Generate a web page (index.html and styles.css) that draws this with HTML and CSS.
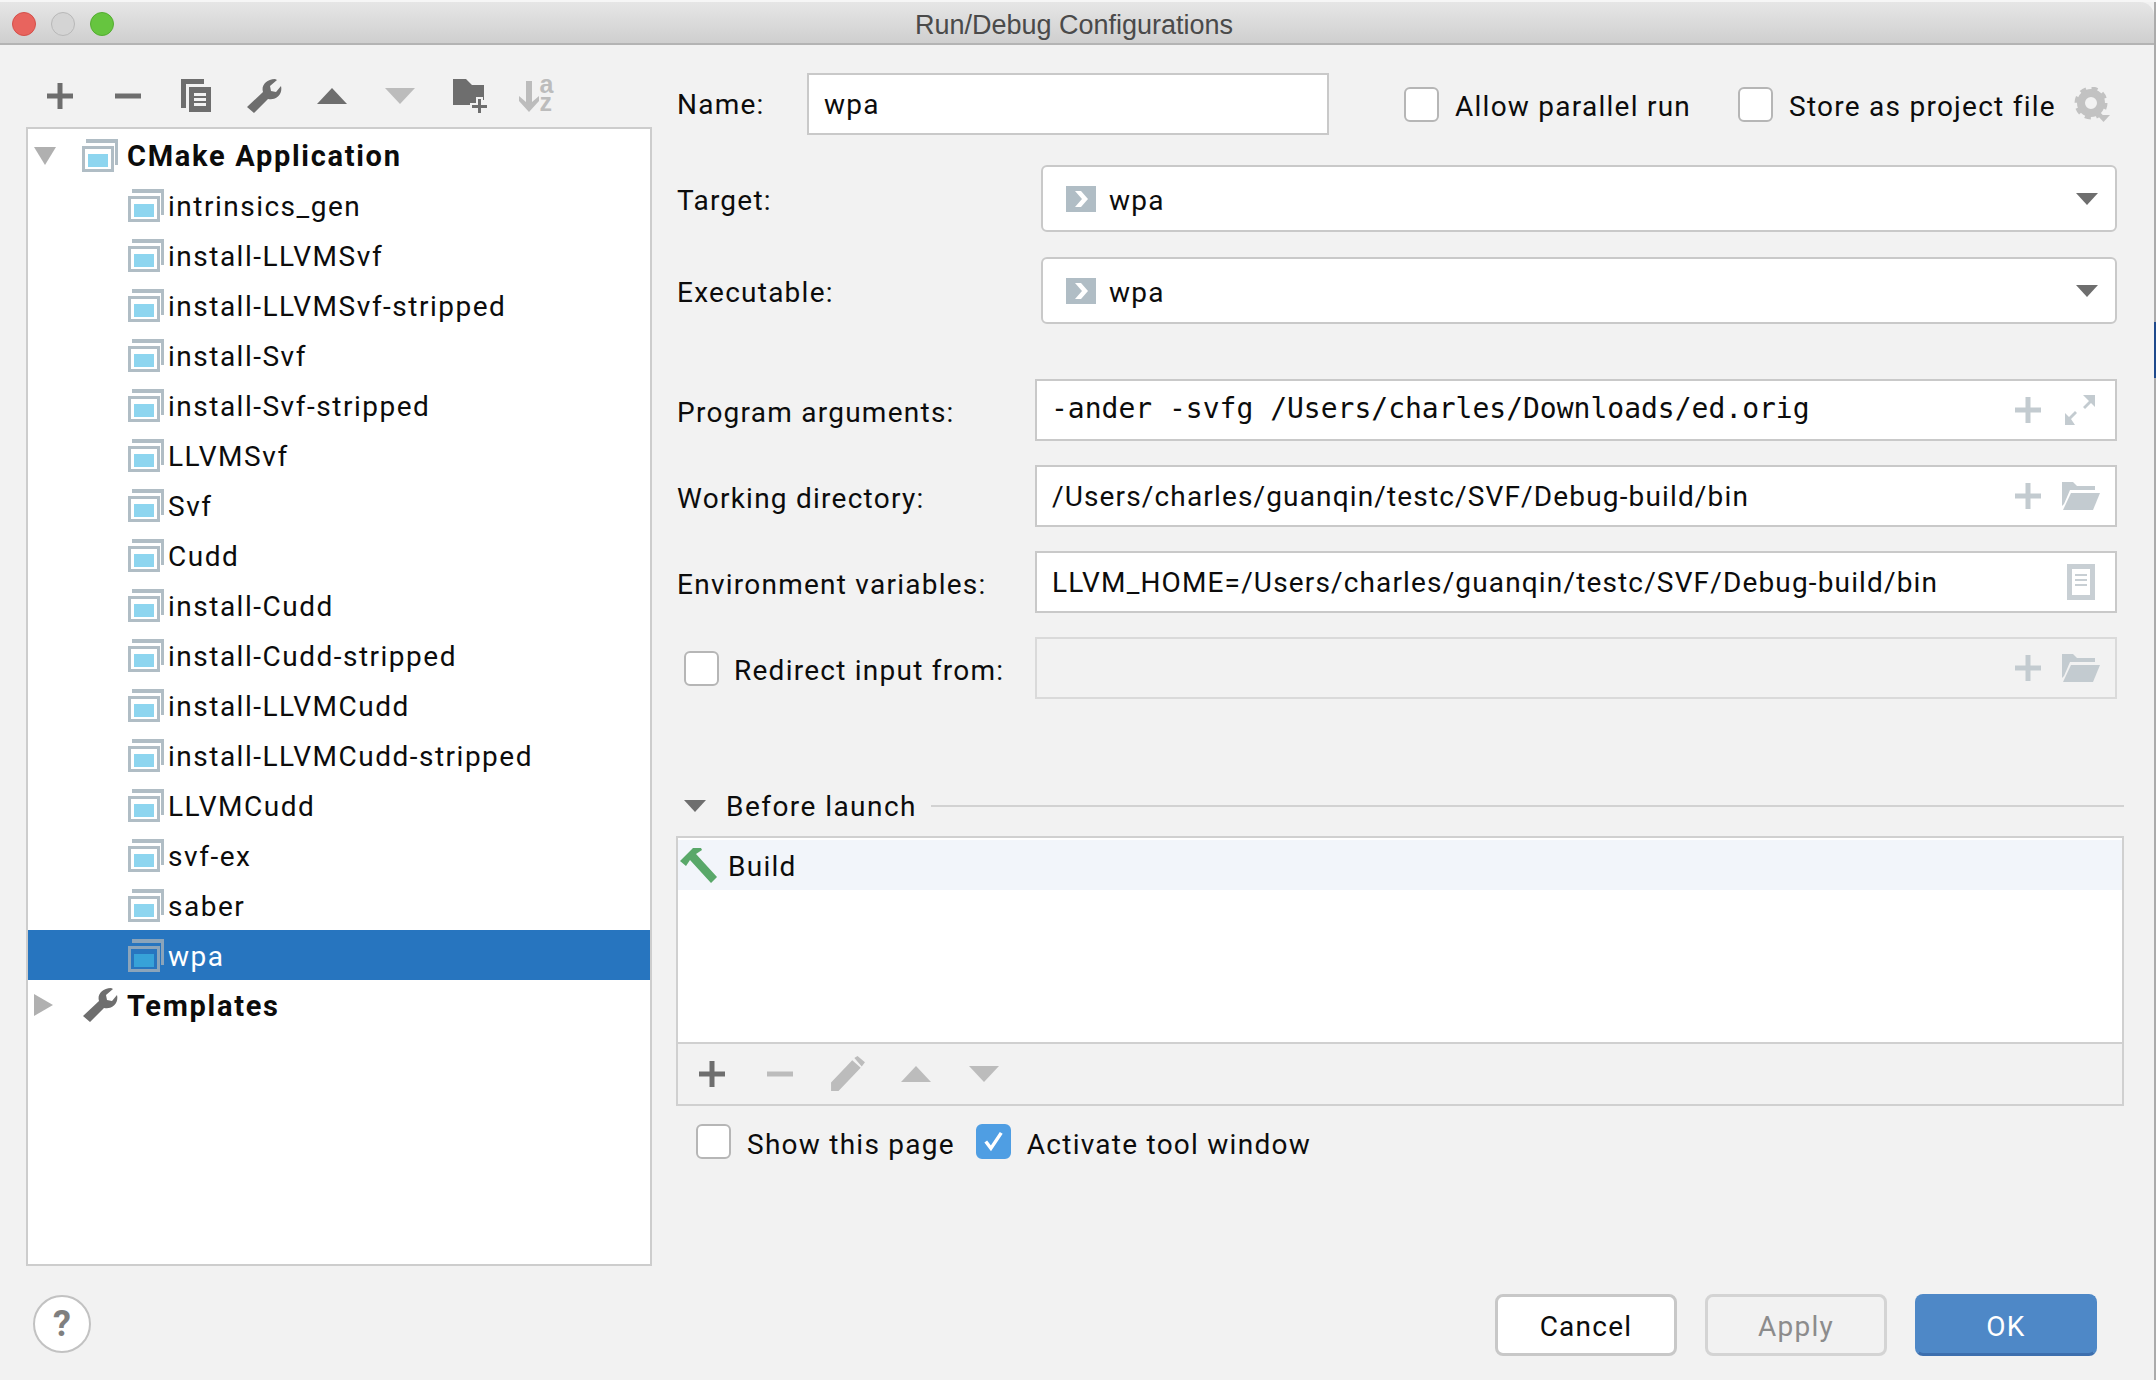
FILE: index.html
```html
<!DOCTYPE html>
<html lang="en">
  <head>
    <meta charset="UTF-8" />
    <title>Run/Debug Configurations</title>
    <link rel="stylesheet" href="styles.css">
  </head>
  <body>
    <!-- Icon sprites -->
    <svg class="sprites" xmlns="http://www.w3.org/2000/svg">
      <symbol id="i-plus" viewBox="0 0 36 36"><path d="M15.500 5h5v10.500H31v5H20.500V31h-5V20.500H5v-5h10.500z"/></symbol>
      <symbol id="i-minus" viewBox="0 0 36 36"><path d="M5 15.500h26v5H5z"/></symbol>
      <symbol id="i-copy" viewBox="0 0 36 36"><path d="M3 1h23v5H8v24H3z"/><path fill-rule="evenodd" d="M11 9h22v25H11zM16 15v3h12v-3zM16 20v3h12v-3zM16 25v3h12v-3z"/></symbol>
      <symbol id="i-wrench" viewBox="0 0 36 36"><path d="M1 29 17 14C15 8 20 1 29 1l2 1-7 6 1 5 5 1 5-6c2 8-5 15-13 13L8 35z"/></symbol>
      <symbol id="i-up" viewBox="0 0 36 36"><path d="M18 10 33 26H3z"/></symbol>
      <symbol id="i-down" viewBox="0 0 36 36"><path d="M3 10H33L18 26z"/></symbol>
      <symbol id="i-folder-add" viewBox="0 0 36 36"><path d="M0 1h13l6 6h12v15h-8v5H0z"/><path stroke="#f2f2f2" stroke-width="2" d="M24 20h5v6h6v5h-6v5h-5v-5h-6v-5h6z"/></symbol>
      <symbol id="i-sort-arrow" viewBox="0 0 20 32"><path d="M7 0h6v21l7-6v5L10 31 0 20v-5l7 6z"/></symbol>
      <symbol id="i-config" viewBox="0 0 36 33">
        <path fill="#b0bdc5" d="M4 0h32v26h-3V4H4z"/>
        <path fill="#b0bdc5" d="M0 7h32v26H0z"/>
        <path fill="#fff" d="M3 10h26v20H3z"/>
        <path fill="#8dd5ef" d="M6 15h20v13H6z"/>
      </symbol>
      <symbol id="i-config-sel" viewBox="0 0 36 33">
        <path fill="#8ba4ba" d="M4 0h32v26h-3V4H4z"/>
        <path fill="#8ba4ba" d="M0 7h32v26H0z"/>
        <path fill="#2775bf" d="M3 10h26v20H3z"/>
        <path fill="#37a2d8" d="M6 15h20v13H6z"/>
      </symbol>
      <symbol id="i-target" viewBox="0 0 30 26"><path fill="#b0bdc5" d="M0 0h30v26H0z"/><path fill="#fff" d="M9 5h6l7 8-7 8H9l7-8z"/></symbol>
      <symbol id="i-field-plus" viewBox="0 0 26 26"><path fill="#c3cbd0" d="M10.500 0h5v10.500H26v5H15.500V26h-5V15.500H0v-5h10.500z"/></symbol>
      <symbol id="i-expand" viewBox="0 0 30 30"><path fill="#c3cbd0" d="M18 0h12v12l-4-4-6 6-2-2 6-6zM0 30V18l4 4 6-6 2 2-6 6 4 6z"/></symbol>
      <symbol id="i-open" viewBox="0 0 38 28"><path fill="#c3cbd0" d="M0 0h11l4 4h18v4H8L2 22 0 24z"/><path fill="#c3cbd0" d="M9 11h29l-7 17H1z"/></symbol>
      <symbol id="i-doc" viewBox="0 0 28 36"><path fill="#c8cfd4" fill-rule="evenodd" d="M0 0h28v36H0zM5 5v26h18V5z"/><path fill="#c8cfd4" d="M8 10h12v2H8zM8 15h12v2H8zM8 20h12v2H8z"/></symbol>
      <symbol id="i-hammer" viewBox="0 0 38 35"><path fill="#59a869" d="M0 13 13 0h8l1 2-6 4 21 23-6 6L10 12l-4 6z"/></symbol>
      <symbol id="i-pencil" viewBox="0 0 34 34"><path d="M1 25 21 4l8 7L8 33H1zM23 2l3-2 7 6-3 4z"/></symbol>
      <symbol id="i-gear" viewBox="0 0 36 36">
        <circle cx="17" cy="16" r="10" fill="none" stroke="#c2c2c2" stroke-width="8"/>
        <circle cx="17" cy="16" r="14.500" fill="none" stroke="#c2c2c2" stroke-width="4" stroke-dasharray="6 5.400"/>
        <path fill="#c2c2c2" d="M23 28h13l-6.500 7z"/>
      </symbol>
    </svg>

    <div class="window">
      <div class="desk-strip"></div>

      <header class="titlebar">
        <div class="lights">
          <span class="light light-close"></span>
          <span class="light light-min"></span>
          <span class="light light-max"></span>
        </div>
        <div class="title">Run/Debug Configurations</div>
      </header>

      <div class="content">
        <!-- Left side: configuration tree -->
        <section class="left">
          <div class="toolbar">
            <span class="tool"><svg class="icon dark"><use href="#i-plus"/></svg></span>
            <span class="tool"><svg class="icon dark"><use href="#i-minus"/></svg></span>
            <span class="tool"><svg class="icon dark"><use href="#i-copy"/></svg></span>
            <span class="tool"><svg class="icon dark"><use href="#i-wrench"/></svg></span>
            <span class="tool"><svg class="icon dark"><use href="#i-up"/></svg></span>
            <span class="tool"><svg class="icon soft"><use href="#i-down"/></svg></span>
            <span class="tool tool-folder"><svg class="icon dark"><use href="#i-folder-add"/></svg></span>
            <span class="tool tool-sort">
              <svg class="sort-arrow soft"><use href="#i-sort-arrow"/></svg>
              <span class="sort-letters">a
z</span>
            </span>
          </div>

          <div class="tree">
            <div class="row group">
              <span class="arrow-open"></span>
              <svg class="cfg"><use href="#i-config"/></svg>
              <span class="row-text">CMake Application</span>
            </div>
            <div class="row leaf"><svg class="cfg"><use href="#i-config"/></svg><span class="row-text">intrinsics_gen</span></div>
            <div class="row leaf"><svg class="cfg"><use href="#i-config"/></svg><span class="row-text">install-LLVMSvf</span></div>
            <div class="row leaf"><svg class="cfg"><use href="#i-config"/></svg><span class="row-text">install-LLVMSvf-stripped</span></div>
            <div class="row leaf"><svg class="cfg"><use href="#i-config"/></svg><span class="row-text">install-Svf</span></div>
            <div class="row leaf"><svg class="cfg"><use href="#i-config"/></svg><span class="row-text">install-Svf-stripped</span></div>
            <div class="row leaf"><svg class="cfg"><use href="#i-config"/></svg><span class="row-text">LLVMSvf</span></div>
            <div class="row leaf"><svg class="cfg"><use href="#i-config"/></svg><span class="row-text">Svf</span></div>
            <div class="row leaf"><svg class="cfg"><use href="#i-config"/></svg><span class="row-text">Cudd</span></div>
            <div class="row leaf"><svg class="cfg"><use href="#i-config"/></svg><span class="row-text">install-Cudd</span></div>
            <div class="row leaf"><svg class="cfg"><use href="#i-config"/></svg><span class="row-text">install-Cudd-stripped</span></div>
            <div class="row leaf"><svg class="cfg"><use href="#i-config"/></svg><span class="row-text">install-LLVMCudd</span></div>
            <div class="row leaf"><svg class="cfg"><use href="#i-config"/></svg><span class="row-text">install-LLVMCudd-stripped</span></div>
            <div class="row leaf"><svg class="cfg"><use href="#i-config"/></svg><span class="row-text">LLVMCudd</span></div>
            <div class="row leaf"><svg class="cfg"><use href="#i-config"/></svg><span class="row-text">svf-ex</span></div>
            <div class="row leaf"><svg class="cfg"><use href="#i-config"/></svg><span class="row-text">saber</span></div>
            <div class="row leaf selected"><svg class="cfg"><use href="#i-config-sel"/></svg><span class="row-text">wpa</span></div>
            <div class="row group">
              <span class="arrow-closed"></span>
              <svg class="cfg icon dark"><use href="#i-wrench"/></svg>
              <span class="row-text">Templates</span>
            </div>
          </div>

          <div class="help">?</div>
        </section>

        <!-- Right side: form -->
        <section class="right">
          <div class="name-row">
            <label class="name-label">Name:</label>
            <div class="input name-input">wpa</div>
            <span class="check check-allow"></span>
            <span class="check-text">Allow parallel run</span>
            <span class="check check-store"></span>
            <span class="check-text">Store as project file</span>
            <svg class="gear"><use href="#i-gear"/></svg>
          </div>

          <div class="combo-row first">
            <label class="combo-label">Target:</label>
            <div class="combo">
              <svg class="target-icon"><use href="#i-target"/></svg>
              <span class="combo-text">wpa</span>
              <span class="combo-arrow"></span>
            </div>
          </div>
          <div class="combo-row">
            <label class="combo-label">Executable:</label>
            <div class="combo">
              <svg class="target-icon"><use href="#i-target"/></svg>
              <span class="combo-text">wpa</span>
              <span class="combo-arrow"></span>
            </div>
          </div>

          <div class="fields">
            <div class="field-row">
              <label class="field-label">Program arguments:</label>
              <div class="input field">
                <span class="field-text mono">-ander -svfg /Users/charles/Downloads/ed.orig</span>
                <svg class="f-plus"><use href="#i-field-plus"/></svg>
                <svg class="f-expand"><use href="#i-expand"/></svg>
              </div>
            </div>
            <div class="field-row">
              <label class="field-label">Working directory:</label>
              <div class="input field">
                <span class="field-text">/Users/charles/guanqin/testc/SVF/Debug-build/bin</span>
                <svg class="f-plus"><use href="#i-field-plus"/></svg>
                <svg class="f-open"><use href="#i-open"/></svg>
              </div>
            </div>
            <div class="field-row">
              <label class="field-label">Environment variables:</label>
              <div class="input field">
                <span class="field-text">LLVM_HOME=/Users/charles/guanqin/testc/SVF/Debug-build/bin</span>
                <svg class="f-doc"><use href="#i-doc"/></svg>
              </div>
            </div>
            <div class="field-row">
              <span class="check check-redirect"></span>
              <label class="redirect-label">Redirect input from:</label>
              <div class="input field disabled">
                <span class="field-text"></span>
                <svg class="f-plus"><use href="#i-field-plus"/></svg>
                <svg class="f-open"><use href="#i-open"/></svg>
              </div>
            </div>
          </div>

          <div class="before-head">
            <span class="arrow-before"></span>
            <span class="before-title">Before launch</span>
            <span class="before-line"></span>
          </div>

          <div class="panel">
            <div class="panel-list">
              <div class="task">
                <svg class="hammer"><use href="#i-hammer"/></svg>
                <span class="task-text">Build</span>
              </div>
            </div>
            <div class="panel-tools">
              <svg class="icon dark ptool"><use href="#i-plus"/></svg>
              <svg class="icon soft ptool"><use href="#i-minus"/></svg>
              <svg class="icon soft ptool"><use href="#i-pencil"/></svg>
              <svg class="icon soft ptool"><use href="#i-up"/></svg>
              <svg class="icon soft ptool"><use href="#i-down"/></svg>
            </div>
          </div>

          <div class="options">
            <span class="check"></span>
            <span class="check-text opt-show">Show this page</span>
            <span class="check checked">
              <svg viewBox="0 0 36 36" class="tick"><path d="M9 18l6 8 12-18" /></svg>
            </span>
            <span class="check-text">Activate tool window</span>
          </div>

          <div class="buttons">
            <button class="btn">Cancel</button>
            <button class="btn btn-off">Apply</button>
            <button class="btn btn-ok">OK</button>
          </div>
        </section>
      </div>
    </div>
  </body>
</html>
```

FILE: styles.css
```css
/* Page and window frame */
body {
  margin: 0;
  background-color: #f6f6f6;
  color: #0c0c0c;
  font-family: Roboto, "Noto Sans", sans-serif;
  font-size: 28px;
  letter-spacing: 1.25px;
  overflow: hidden;
}

.sprites {
  display: none;
}

.window {
  position: relative;
  width: 2156px;
  height: 1378px;
  margin-top: 2px;
  box-sizing: border-box;
  border-right: 2px solid #ababab;
  background-color: #f2f2f2;
}

/* Sliver of the desktop window behind the dialog */
.desk-strip {
  position: absolute;
  top: 320px;
  right: -2px;
  width: 2px;
  height: 56px;
  background-color: #1f4a8c;
}

/* Title bar */
.titlebar {
  display: flex;
  align-items: center;
  height: 43px;
  padding-top: 2px;
  box-sizing: border-box;
  border-bottom: 2px solid #b4b4b4;
  border-top-right-radius: 14px;
  background: linear-gradient(#e6e6e6, #cfcfcf);
}

.lights {
  display: flex;
  gap: 15px;
  width: 0;
  padding-left: 12px;
}

.light {
  flex: none;
  width: 24px;
  height: 24px;
  box-sizing: border-box;
  border-radius: 50%;
}

.light-close {
  background-color: #e8645e;
  border: 1px solid #d4504a;
}

.light-min {
  background-color: #d4d4d4;
  border: 1px solid #b8b8b8;
}

.light-max {
  background-color: #66c53f;
  border: 1px solid #54ad31;
}

.title {
  flex: 1;
  text-align: center;
  font-family: "Liberation Sans", sans-serif;
  font-size: 27px;
  letter-spacing: 0;
  color: #4a4a4a;
  padding: 3px 18px 0 0;
}

/* Main split */
.content {
  display: flex;
}

.left {
  flex: none;
  width: 676px;
  padding-left: 26px;
  box-sizing: border-box;
}

.right {
  flex: 1;
  padding-right: 37px;
  min-width: 0;
}

/* Icons */
.icon {
  width: 36px;
  height: 36px;
}

.dark {
  fill: #6e6e6e;
}

.soft {
  fill: #bcbcbc;
}

.toolbar {
  display: flex;
  height: 82px;
  padding-top: 33px;
  box-sizing: border-box;
}

.tool {
  display: flex;
  justify-content: center;
  width: 68px;
  height: 36px;
}

.tool-folder {
  padding-left: 6px;
  box-sizing: border-box;
}

.sort-arrow {
  width: 20px;
  height: 32px;
  margin-top: 3px;
}

.sort-letters {
  margin-left: 1px;
  margin-top: -3px;
  white-space: pre-line;
  font-family: "Liberation Sans", sans-serif;
  font-weight: bold;
  font-size: 25px;
  line-height: 18px;
  letter-spacing: 0;
  color: #bcbcbc;
}

/* Tree */
.tree {
  width: 626px;
  height: 1139px;
  box-sizing: border-box;
  border: 2px solid #cdcdcd;
  padding-top: 1px;
  background-color: #fff;
}

.row {
  display: flex;
  align-items: center;
  height: 50px;
  position: relative;
}

.row-text {
  padding-top: 2px;
}

.cfg {
  flex: none;
  width: 36px;
  height: 33px;
}

.cfg.icon {
  height: 36px;
}

.leaf {
  padding-left: 100px;
  letter-spacing: 1.5px;
}

.leaf .cfg {
  margin-right: 4px;
}

.group {
  padding-left: 54px;
  font-weight: bold;
  font-size: 29px;
  letter-spacing: 1.7px;
}

.group .cfg {
  margin-right: 9px;
}

.selected {
  background-color: #2775bf;
  color: #fff;
}

.arrow-open {
  position: absolute;
  left: 6px;
  top: 17px;
  border-left: 11px solid transparent;
  border-right: 11px solid transparent;
  border-top: 18px solid #b0b0b0;
}

.arrow-closed {
  position: absolute;
  left: 6px;
  top: 14px;
  border-top: 11px solid transparent;
  border-bottom: 11px solid transparent;
  border-left: 19px solid #b0b0b0;
}

.help {
  width: 58px;
  height: 58px;
  margin: 29px 0 0 7px;
  box-sizing: border-box;
  border: 2px solid #c2c2c2;
  border-radius: 50%;
  background-color: #fff;
  text-align: center;
  line-height: 54px;
  font-weight: bold;
  font-size: 36px;
  letter-spacing: 0;
  color: #7f7f7f;
}

/* Form: shared parts */
.input {
  box-sizing: border-box;
  border: 2px solid #c9c9c9;
  background-color: #fff;
}

.check {
  display: inline-block;
  flex: none;
  width: 35px;
  height: 35px;
  box-sizing: border-box;
  border: 2px solid #b6b6b6;
  border-radius: 6px;
  background-color: #fff;
}

/* Name row */
.name-row {
  display: flex;
  align-items: center;
  height: 62px;
  margin-top: 28px;
  padding-left: 1px;
}

.name-label {
  width: 130px;
}

.name-input {
  display: flex;
  align-items: center;
  width: 522px;
  height: 62px;
  padding-left: 15px;
}

.check-allow {
  margin-left: 75px;
}

.check-text {
  margin-left: 16px;
  padding-top: 4px;
  white-space: nowrap;
}

.check-store {
  margin-left: 47px;
}

.gear {
  width: 36px;
  height: 36px;
  margin-left: 18px;
  margin-top: 2px;
}

/* Target and executable */
.combo-row {
  display: flex;
  align-items: center;
  margin-top: 25px;
  padding-left: 1px;
}

.combo-row.first {
  margin-top: 30px;
}

.combo-label {
  width: 364px;
  padding-top: 4px;
}

.combo {
  display: flex;
  align-items: center;
  flex: 1;
  height: 67px;
  box-sizing: border-box;
  border: 2px solid #c9c9c9;
  border-radius: 6px;
  background-color: #fff;
  padding-left: 23px;
}

.target-icon {
  width: 30px;
  height: 26px;
}

.combo-text {
  flex: 1;
  margin-left: 13px;
  padding-top: 3px;
}

.combo-arrow {
  margin-right: 17px;
  border-left: 11px solid transparent;
  border-right: 11px solid transparent;
  border-top: 12px solid #6e6e6e;
}

/* Text fields */
.fields {
  display: flex;
  flex-direction: column;
  gap: 24px;
  margin-top: 55px;
}

.field-row {
  display: flex;
  align-items: center;
  padding-left: 1px;
}

.field-label {
  width: 358px;
  padding-top: 4px;
}

.redirect-label {
  width: 301px;
  padding-top: 4px;
  white-space: nowrap;
}

.check-redirect {
  margin: 0 15px 0 7px;
}

.field {
  display: flex;
  align-items: center;
  flex: 1;
  height: 62px;
  padding: 0 15px;
}

.field.disabled {
  background-color: #f2f2f2;
  border-color: #dadada;
}

.field-text {
  flex: 1;
  white-space: nowrap;
  letter-spacing: 1.15px;
}

.mono {
  font-family: "DejaVu Sans Mono", monospace;
  font-size: 28px;
  letter-spacing: 0;
  margin: -3px 0 0 -1px;
}

.f-plus {
  width: 26px;
  height: 26px;
  margin-right: 21px;
}

.f-expand {
  width: 30px;
  height: 30px;
  margin: 0 5px 0 3px;
}

.f-open {
  width: 38px;
  height: 28px;
}

.f-doc {
  width: 28px;
  height: 36px;
  margin-right: 5px;
}

/* Before launch */
.before-head {
  display: flex;
  align-items: center;
  height: 30px;
  margin-top: 92px;
  padding-left: 8px;
}

.arrow-before {
  border-left: 11.500px solid transparent;
  border-right: 11.500px solid transparent;
  border-top: 12px solid #6e6e6e;
}

.before-title {
  margin-left: 20px;
  letter-spacing: 1.45px;
}

.before-line {
  flex: 1;
  height: 2px;
  margin: 0 -7px 0 14px;
  background-color: #d2d2d2;
}

.panel {
  width: 1448px;
  margin: 15px 0 0 0;
  box-sizing: border-box;
  border: 2px solid #d0d0d0;
}

.panel-list {
  height: 204px;
  padding-top: 2px;
  box-sizing: border-box;
  background-color: #fff;
}

.task {
  display: flex;
  align-items: center;
  height: 50px;
  padding-left: 2px;
  background-color: #f2f5fa;
}

.task-text {
  padding-top: 2px;
}

.hammer {
  width: 38px;
  height: 35px;
  margin-right: 10px;
}

.panel-tools {
  display: flex;
  align-items: center;
  height: 60px;
  padding-left: 16px;
  border-top: 2px solid #d0d0d0;
}

.ptool {
  margin-right: 32px;
}

/* Bottom of the form */
.options {
  display: flex;
  align-items: center;
  margin-top: 16px;
  padding-left: 20px;
}

.options .check-text {
  padding-top: 6px;
}

.opt-show {
  margin-right: 21px;
}

.checked {
  background-color: #4f9ee3;
  border-color: #4f9ee3;
}

.tick {
  display: block;
  width: 31px;
  height: 31px;
  fill: none;
  stroke: #fff;
  stroke-width: 4;
}

.buttons {
  display: flex;
  justify-content: flex-end;
  gap: 28px;
  margin: 133px 20px 0 0;
}

.btn {
  width: 182px;
  height: 62px;
  padding: 2px 0 0;
  box-sizing: border-box;
  border: 3px solid #c8c8c8;
  border-radius: 8px;
  background-color: #fff;
  font-family: Roboto, "Noto Sans", sans-serif;
  font-size: 28px;
  letter-spacing: 1.25px;
  color: #0c0c0c;
}

.btn-off {
  background-color: #f2f2f2;
  border-color: #d4d4d4;
  color: #8c8c8c;
}

.btn-ok {
  background-color: #4e88c7;
  border-color: #4e88c7;
  border-bottom-color: #3d6fae;
  color: #fff;
}
```
